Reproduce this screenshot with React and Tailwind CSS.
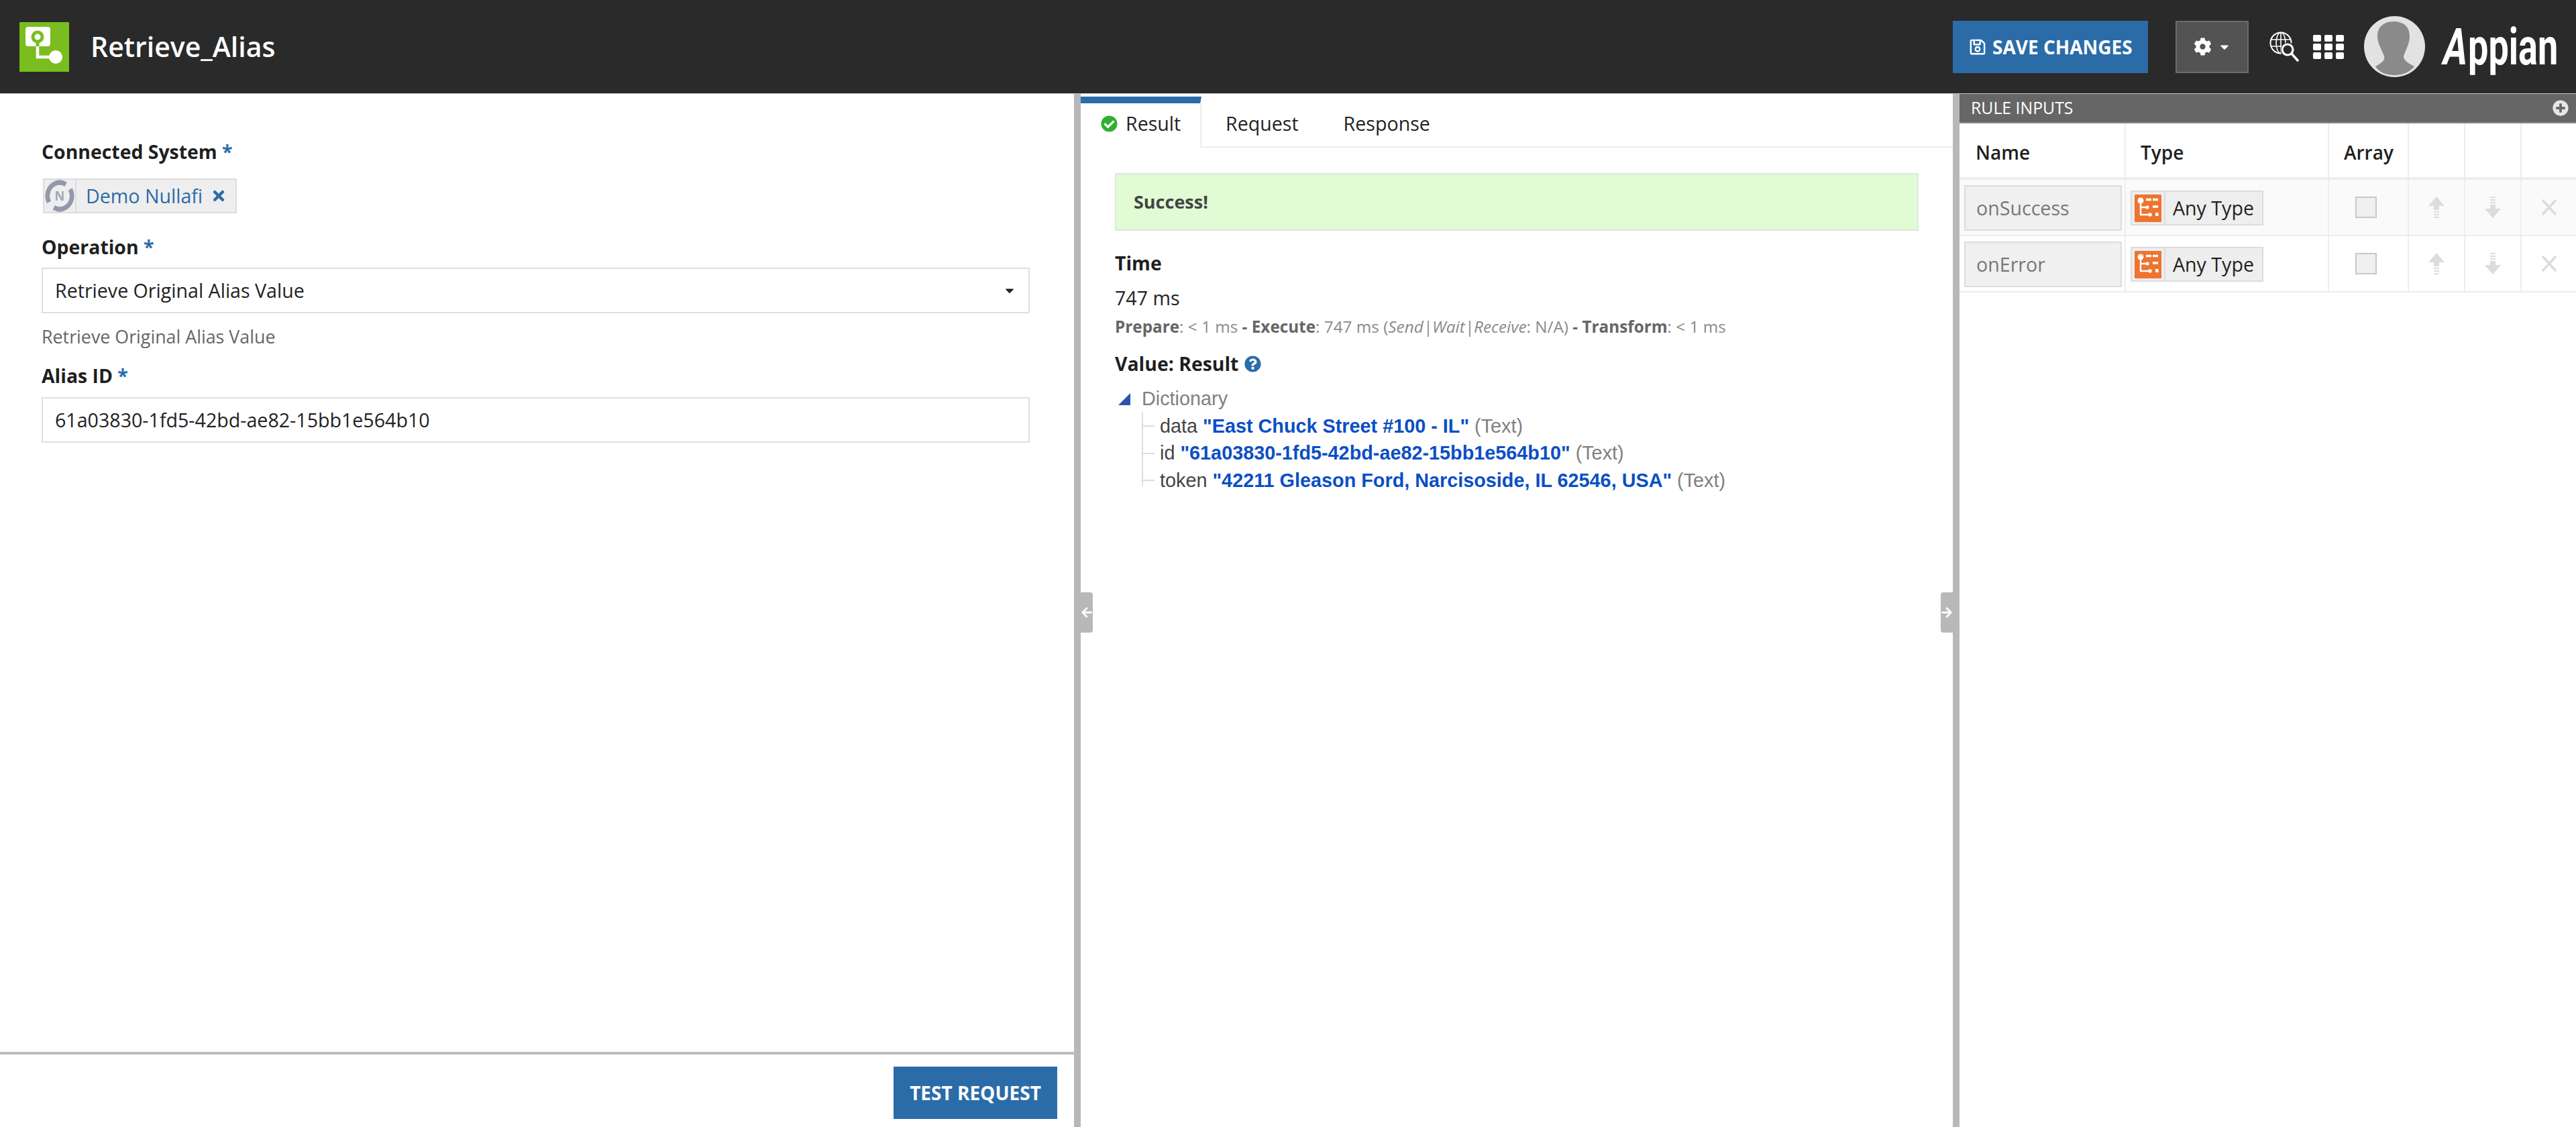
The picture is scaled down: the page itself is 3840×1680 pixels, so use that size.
import React from 'react';
import {
  FaRegSave,
  FaCog,
  FaCaretDown,
  FaTimes,
  FaCheckCircle,
  FaQuestionCircle,
  FaPlusCircle,
  FaArrowLeft,
  FaArrowRight,
} from 'react-icons/fa';

const sans = "font-['Open_Sans',sans-serif]";

const ProcessLogo = () => (
  <svg viewBox="0 0 74 74" className="w-[74px] h-[74px] shrink-0">
    <rect width="74" height="74" fill="#7abd1f" />
    <rect x="9" y="7" width="37" height="29" rx="4" fill="#fff" />
    <circle cx="27" cy="22" r="7" fill="#fff" stroke="#7abd1f" strokeWidth="5" />
    <rect x="24.5" y="28" width="5" height="8" fill="#7abd1f" />
    <path d="M27 36v16h26" fill="none" stroke="#fff" strokeWidth="4.5" />
    <circle cx="54" cy="52" r="10" fill="#fff" />
  </svg>
);

const GlobeSearch = () => (
  <svg viewBox="0 0 45 45" className="w-[45px] h-[45px] shrink-0" fill="none" stroke="#fff">
    <circle cx="17" cy="17" r="15.5" strokeWidth="2" />
    <ellipse cx="17" cy="17" rx="7" ry="15.5" strokeWidth="1.6" />
    <path d="M2 12h30M2 22h30M17 1v32" strokeWidth="1.6" />
    <circle cx="28" cy="28" r="11.5" fill="#2a2a2a" stroke="none" />
    <circle cx="27" cy="27" r="8" strokeWidth="3.2" />
    <path d="M33 33l9 10" strokeWidth="3.6" strokeLinecap="round" />
  </svg>
);

const AppGrid = () => (
  <svg viewBox="0 0 46 36" className="w-[46px] h-[36px] shrink-0" fill="#fff">
    {[0, 13, 26].map((y) =>
      [0, 17, 34].map((x) => <rect key={`${x}-${y}`} x={x} y={y} width="12" height="10" rx="2" />)
    )}
  </svg>
);

const Avatar = () => (
  <svg viewBox="0 0 91 91" className="w-[91px] h-[91px] shrink-0">
    <circle cx="45.5" cy="45.5" r="45.5" fill="#e2e2e2" />
    <path
      d="M20 30C20 14 32 8 44 8C57 8 68 14 68 30C68 42 61 52 59 60C59 66 66 70 75 75C68 84 57 88 45 88C33 88 23 84 17 75C26 70 32 66 30 60C28 52 20 42 20 30Z"
      fill="#8a8a8a"
    />
  </svg>
);

const NullafiIcon = () => (
  <svg viewBox="0 0 48 48" preserveAspectRatio="none" className="w-[46px] h-[50px]">
    <circle
      cx="24"
      cy="24"
      r="19"
      fill="none"
      stroke="#9498aa"
      strokeWidth="7"
      strokeDasharray="49 10.7"
      transform="rotate(-30 24 24)"
    />
    <text x="24" y="31" textAnchor="middle" fontSize="19" fontWeight="700" fill="#a3a7b6" fontFamily="Open Sans">
      N
    </text>
  </svg>
);

const AnyTypeIcon = () => (
  <svg viewBox="0 0 40 41" className="w-[40px] h-[41px] shrink-0">
    <rect width="40" height="41" rx="1" fill="#ef7430" />
    <circle cx="9" cy="9" r="4.5" fill="#fff" />
    <path d="M9 9v21h14M9 19h9" fill="none" stroke="#fff" strokeWidth="2.4" />
    <circle cx="19" cy="19" r="2.6" fill="#fff" />
    <circle cx="23" cy="30" r="2.8" fill="#fff" />
    <path d="M17 7.5h8M27 7.5h8M27 18h8" fill="none" stroke="#fff" strokeWidth="3.6" />
    <rect x="31" y="27" width="4.5" height="5" fill="#fff" />
  </svg>
);

const UpArrow = () => (
  <svg viewBox="0 0 24 32" className="w-[24px] h-[32px] fill-[#dcdcdc]">
    <path d="M12 0l12 14h-8v6H8v-6H0z" />
    <path d="M8 22h8v2H8zM8 26h8v2H8zM8 30h8v2H8z" />
  </svg>
);

const DownArrow = () => (
  <svg viewBox="0 0 24 32" className="w-[24px] h-[32px] fill-[#dcdcdc]">
    <path d="M12 32L0 18h8v-6h8v6h8z" />
    <path d="M8 0h8v2H8zM8 4h8v2H8zM8 8h8v2H8z" />
  </svg>
);

const ThinX = () => (
  <svg viewBox="0 0 24 24" preserveAspectRatio="none" className="w-[24px] h-[26px]">
    <path d="M2 2l20 20M22 2L2 22" stroke="#dcdcdc" strokeWidth="3.4" fill="none" />
  </svg>
);

const Label = ({ text, className = '' }) => (
  <div className={`h-[40px] leading-[40px] text-[28.4px] font-bold text-[#1f1f1f] ${className}`}>
    {text} <span className="text-[#2b6ca8]">*</span>
  </div>
);

const Header = () => (
  <div className="h-[140px] shrink-0 bg-[#2a2a2a] border-b border-[#c4c4c4] flex items-center">
    <div className="ml-[29px]">
      <ProcessLogo />
    </div>
    <div className="ml-[32px] text-[41px] font-semibold text-white">Retrieve_Alias</div>
    <div className="ml-auto flex items-center">
      <button className="w-[291px] h-[78px] bg-[#2b6ca8] text-white text-[28px] font-bold flex items-center pl-[24px] gap-[9px]">
        <FaRegSave className="w-[26px] h-[26px]" />
        SAVE CHANGES
      </button>
      <button className="ml-[41px] w-[109px] h-[78px] bg-[#535353] border-2 border-[#6c6c6c] text-white flex items-center justify-center gap-[9px]">
        <FaCog className="w-[27px] h-[27px]" />
        <FaCaretDown className="w-[20px] h-[20px]" />
      </button>
      <div className="ml-[31px]">
        <GlobeSearch />
      </div>
      <div className="ml-[20px]">
        <AppGrid />
      </div>
      <div className="ml-[30px]">
        <Avatar />
      </div>
      <div className="ml-[29px] mr-[28px] w-[168px] h-[84px] flex items-center justify-center">
        <span className="shrink-0 whitespace-nowrap font-['Roboto',sans-serif] font-bold text-[76px] leading-[76px] text-white scale-x-[0.71]">
          <span className="inline-block -skew-x-12">A</span>ppian
        </span>
      </div>
    </div>
  </div>
);

const LeftPanel = () => (
  <div className="w-[1601px] shrink-0 flex flex-col">
    <div className="flex-1 pt-[66px] pl-[62px] pr-[66px]">
      <Label text="Connected System" />
      <div className="mt-[20px] ml-[2px] w-[289px] h-[52px] bg-[#eeeeee] border-2 border-[#dcdcdc] flex items-center">
        <div className="w-[48px] h-full border-r-2 border-[#dcdcdc] flex items-center justify-center shrink-0">
          <NullafiIcon />
        </div>
        <span className="ml-[14px] text-[28.6px] text-[#2b6ca8]">Demo Nullafi</span>
        <FaTimes className="ml-[13px] w-[22px] h-[24px] text-[#2b6ca8]" />
      </div>
      <Label text="Operation" className="mt-[30px]" />
      <div className="mt-[11px] h-[68px] border-2 border-[#dfdfdf] flex items-center pl-[18px] pr-[18px] text-[28.6px] text-[#222222]">
        Retrieve Original Alias Value
        <FaCaretDown className="ml-auto w-[20px] h-[20px] text-[#222222]" />
      </div>
      <div className="mt-[17px] h-[36px] leading-[36px] text-[26.8px] text-[#666666]">Retrieve Original Alias Value</div>
      <Label text="Alias ID" className="mt-[20px]" />
      <div className="mt-[12px] h-[68px] border-2 border-[#dfdfdf] flex items-center pl-[18px] text-[28.6px] text-[#222222]">
        61a03830-1fd5-42bd-ae82-15bb1e564b10
      </div>
    </div>
    <div className="h-[112px] shrink-0 border-t-[4px] border-[#bcbcbc] flex justify-end pt-[18px] pr-[25px]">
      <button className="w-[244px] h-[78px] bg-[#2b6ca8] text-white text-[28px] font-bold">TEST REQUEST</button>
    </div>
  </div>
);

const TreeRow = ({ name, value }) => (
  <div className="h-[40.5px] flex items-center whitespace-pre">
    <span className="w-[17px] h-[2px] bg-[#dddddd] mr-[8px]" />
    <span className="text-[#444444]">{name} </span>
    <span className="font-bold text-[#0b4fc4]">{value}</span>
    <span className="text-[#808080]"> (Text)</span>
  </div>
);

const MiddlePanel = () => (
  <div className="flex-1 min-w-0">
    <div className="h-[80px] border-b-2 border-[#ededed] flex text-[28.6px] text-[#222222]">
      <div className="w-[180px] h-[76px] mt-[4px] bg-white border-t-[10px] border-t-[#2b6ca8] border-r-2 border-r-[#ededed] flex items-center pl-[30px] pb-[6px]">
        <FaCheckCircle className="w-[25px] h-[25px] text-[#2fb12f] mr-[12px]" />
        Result
      </div>
      <div className="ml-[36px] mt-[10px] flex items-center">Request</div>
      <div className="ml-[67px] mt-[10px] flex items-center">Response</div>
    </div>
    <div className="pl-[51px] pr-[51px]">
      <div className="mt-[38px] h-[86px] bg-[#e1fbd5] border-2 border-[#dfe8da] flex items-center pl-[26px] text-[27px] font-bold text-[#444444]">
        Success!
      </div>
      <div className="mt-[28px] h-[40px] leading-[40px] text-[28.4px] font-bold text-[#1f1f1f]">Time</div>
      <div className="mt-[14px] h-[36px] leading-[36px] text-[28.6px] text-[#222222]">747 ms</div>
      <div className="mt-[10px] h-[30px] leading-[30px] text-[24.3px] text-[#8a8a8a] whitespace-pre">
        <b className="font-bold text-[#666666]">Prepare</b>: &lt; 1 ms <b className="font-bold text-[#666666]">- Execute</b>: 747 ms (
        <i>Send|Wait|Receive</i>: N/A) <b className="font-bold text-[#666666]">- Transform</b>: &lt; 1 ms
      </div>
      <div className="mt-[20px] h-[40px] flex items-center gap-[9px] text-[28.4px] font-bold text-[#1f1f1f]">
        Value: Result
        <FaQuestionCircle className="w-[25px] h-[25px] text-[#2b6ca8]" />
      </div>
      <div className="mt-[12px] font-['Liberation_Sans',sans-serif] text-[28.8px]">
        <div className="h-[41px] flex items-center text-[#808080]">
          <svg viewBox="0 0 18 18" className="ml-[5px] w-[18px] h-[18px] fill-[#2a54a8] mr-[17px]">
            <path d="M18 0v18H0z" />
          </svg>
          Dictionary
        </div>
        <div className="ml-[40px] h-[109px] border-l-2 border-[#dddddd]">
          <TreeRow name="data" value={'"East Chuck Street #100 - IL"'} />
          <TreeRow name="id" value={'"61a03830-1fd5-42bd-ae82-15bb1e564b10"'} />
          <TreeRow name="token" value={'"42211 Gleason Ford, Narcisoside, IL 62546, USA"'} />
        </div>
      </div>
    </div>
  </div>
);

const InputRow = ({ name, striped }) => (
  <div
    className={`grid grid-cols-[248px_303px_119px_84px_84px_81px] h-[84px] border-b-2 border-[#ededed] ${
      striped ? 'bg-[#fafafa]' : 'bg-white'
    }`}
  >
    <div className="border-r-2 border-[#ededed] pl-[7px] pt-[8px]">
      <div className="w-[235px] h-[68px] bg-[#f0f0f0] border-2 border-[#dcdcdc] flex items-center pl-[16px] text-[28.6px] text-[#777777]">
        {name}
      </div>
    </div>
    <div className="border-r-2 border-[#ededed] pl-[7px] pt-[16px]">
      <div className="w-[198px] h-[52px] bg-[#eeeeee] border-2 border-[#dcdcdc] flex items-center pl-[4px] text-[28.6px] text-[#222222]">
        <AnyTypeIcon />
        <span className="ml-[4px] h-full border-l-2 border-[#dcdcdc] pl-[11px] flex items-center">Any Type</span>
      </div>
    </div>
    <div className="border-r-2 border-[#ededed] flex items-center justify-center">
      <div className="w-[32px] h-[32px] -ml-[8px] bg-[#f0f0f0] border-2 border-[#c8c8c8]" />
    </div>
    <div className="border-r-2 border-[#ededed] flex items-center justify-center">
      <UpArrow />
    </div>
    <div className="border-r-2 border-[#ededed] flex items-center justify-center">
      <DownArrow />
    </div>
    <div className="flex items-center justify-center">
      <ThinX />
    </div>
  </div>
);

const RightPanel = () => (
  <div className="w-[919px] shrink-0">
    <div className="h-[44px] bg-[#666666] flex items-center pl-[17px] pr-[11px] text-[24.8px] text-white border-b-2 border-[#8a8a8a]">
      RULE INPUTS
      <FaPlusCircle className="ml-auto w-[24px] h-[24px] text-[#e6e6e6]" />
    </div>
    <div className="grid grid-cols-[248px_303px_119px_84px_84px_81px] h-[84px] border-b-4 border-[#ededed] text-[28px] font-semibold text-[#1f1f1f]">
      <div className="border-r-2 border-[#ededed] flex items-center pl-[24px] pt-[6px]">Name</div>
      <div className="border-r-2 border-[#ededed] flex items-center pl-[22px] pt-[6px]">Type</div>
      <div className="border-r-2 border-[#ededed] flex items-center pl-[22px] pt-[6px]">Array</div>
      <div className="border-r-2 border-[#ededed]" />
      <div className="border-r-2 border-[#ededed]" />
      <div />
    </div>
    <InputRow name="onSuccess" striped />
    <InputRow name="onError" />
  </div>
);

const App = () => {
  return (
    <div className={`w-[3840px] h-[1680px] bg-white flex flex-col overflow-hidden ${sans}`}>
      <Header />
      <div className="flex-1 flex min-h-0 relative">
        <LeftPanel />
        <div className="w-[10px] shrink-0 bg-[#b8b8b8] relative">
          <div className="absolute left-[10px] top-[743px] w-[18px] h-[60px] bg-[#b8b8b8] rounded-r-[4px] flex items-center justify-center">
            <FaArrowLeft className="w-[18px] h-[18px] text-white" />
          </div>
        </div>
        <MiddlePanel />
        <div className="w-[10px] shrink-0 bg-[#b8b8b8] relative">
          <div className="absolute right-[10px] top-[743px] w-[18px] h-[60px] bg-[#b8b8b8] rounded-l-[4px] flex items-center justify-center">
            <FaArrowRight className="w-[18px] h-[18px] text-white" />
          </div>
        </div>
        <RightPanel />
      </div>
    </div>
  );
};

export default App;
